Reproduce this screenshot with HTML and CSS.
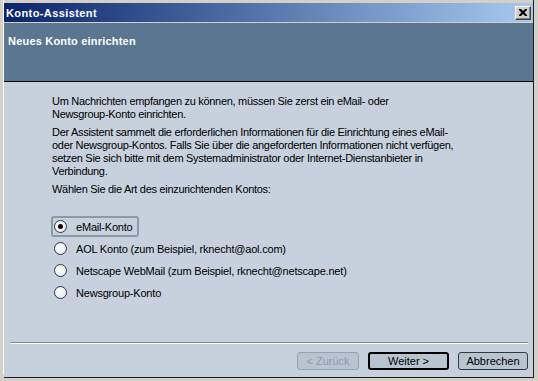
FILE: index.html
```html
<!DOCTYPE html>
<html lang="de">
<head>
    <meta charset="UTF-8">
    <title>Konto-Assistent</title>
    <link rel="stylesheet" href="styles.css">
</head>
<body>
    <div class="window">
        <div class="titlebar">
            <span class="title">Konto-Assistent</span>
            <span class="close-btn">
                <svg width="8" height="7" viewBox="0 0 8 7">
                    <path d="M0 0h2l2 2 2-2h2v1l-2.5 2.5 2.5 2.5v1h-2l-2-2-2 2h-2v-1l2.5-2.5-2.5-2.5z" fill="#000"/>
                </svg>
            </span>
        </div>

        <div class="header">
            <h1>Neues Konto einrichten</h1>
        </div>

        <div class="content">
            <div class="intro">
                <p>Um Nachrichten empfangen zu können, müssen Sie zerst ein eMail- oder<br>Newsgroup-Konto einrichten.</p>
                <p>Der Assistent sammelt die erforderlichen Informationen für die Einrichtung eines eMail-<br>oder Newsgroup-Kontos. Falls Sie über die angeforderten Informationen nicht verfügen,<br>setzen Sie sich bitte mit dem Systemadministrator oder Internet-Dienstanbieter in<br>Verbindung.</p>
                <p>Wählen Sie die Art des einzurichtenden Kontos:</p>
            </div>

            <div class="options">
                <label class="option focused"><span class="radio checked"></span>eMail-Konto</label>
                <label class="option"><span class="radio"></span>AOL Konto (zum Beispiel, rknecht@aol.com)</label>
                <label class="option"><span class="radio"></span>Netscape WebMail (zum Beispiel, rknecht@netscape.net)</label>
                <label class="option"><span class="radio"></span>Newsgroup-Konto</label>
            </div>

            <div class="footer">
                <div class="separator"></div>
                <div class="buttons">
                    <button class="btn btn-back" disabled>&lt; Zurück</button>
                    <button class="btn btn-next">Weiter &gt;</button>
                    <button class="btn btn-cancel">Abbrechen</button>
                </div>
            </div>
        </div>
    </div>
</body>
</html>
```

FILE: styles.css
```css
body {
    margin: 0;
    padding: 0;
    background-color: #d4d0c8;
    font-family: "Liberation Sans", Arial, sans-serif;
    font-size: 11px;
}

.window {
    width: 530px;
    height: 378px;
    margin-left: 4px;
    padding-top: 3px;
    box-sizing: border-box;
    border-right: 1px solid #202020;
    border-bottom: 1px solid #202020;
    box-shadow: -3px -2px 0 -2px #ffffff;
    display: flex;
    flex-direction: column;
}

.titlebar {
    height: 19px;
    margin-bottom: 1px;
    background: linear-gradient(to right, #0a246a, #a6caf0);
    display: flex;
    align-items: center;
    justify-content: space-between;
    padding: 0 2px;
}

.title {
    color: #fff;
    font-weight: bold;
    font-size: 11px;
    letter-spacing: 0.4px;
}

.close-btn {
    width: 12px;
    height: 10px;
    background-color: #d4d0c8;
    border-top: 1px solid #fff;
    border-left: 1px solid #fff;
    border-right: 1px solid #404040;
    border-bottom: 1px solid #404040;
    box-shadow: inset -1px -1px 0 #808080;
    display: flex;
    align-items: center;
    justify-content: center;
    padding: 1px;
}

.header {
    height: 58px;
    background-color: #5b7691;
    border-bottom: 1px solid #000;
}

.header h1 {
    margin: 0;
    padding: 12px 0 0 4px;
    color: #fff;
    font-size: 11px;
    font-weight: bold;
    line-height: 13px;
    letter-spacing: 0.2px;
}

.content {
    flex: 1;
    background-color: #c6d1dd;
    display: flex;
    flex-direction: column;
}

.intro {
    padding: 13px 0 0 48px;
}

.intro p {
    margin: 0 0 5px 0;
    line-height: 13px;
    color: #000;
    letter-spacing: -0.3px;
}

.options {
    margin-top: 15px;
    padding-left: 47px;
    display: flex;
    flex-direction: column;
    align-items: flex-start;
    gap: 1px;
}

.option {
    height: 21px;
    box-sizing: border-box;
    display: flex;
    align-items: center;
    padding: 0 4px 0 1px;
    border: 2px solid transparent;
    border-radius: 3px;
    letter-spacing: -0.2px;
}

.option.focused {
    border-color: #8d99a7;
}

.radio {
    width: 13px;
    height: 13px;
    box-sizing: border-box;
    border: 1px solid #2c3844;
    border-radius: 50%;
    background: radial-gradient(circle at 40% 40%, #ffffff, #dde5ee);
    margin-right: 9px;
    display: flex;
    align-items: center;
    justify-content: center;
}

.radio.checked::after {
    content: "";
    width: 5px;
    height: 5px;
    border-radius: 50%;
    background-color: #000;
}

.footer {
    margin-top: auto;
    padding-bottom: 7px;
}

.separator {
    margin: 0 5px 0 6px;
    height: 1px;
    background-color: #7d8a98;
    border-bottom: 1px solid #fff;
}

.buttons {
    display: flex;
    justify-content: flex-end;
    gap: 9px;
    margin-top: 8px;
    padding-right: 5px;
}

.btn {
    height: 18px;
    padding: 0;
    font-family: "Liberation Sans", Arial, sans-serif;
    font-size: 11px;
    background-color: #b9c4d1;
    border: 1px solid #303840;
    border-radius: 3px;
    color: #000;
}

.btn-back {
    width: 62px;
    color: #8e9aa9;
    border-color: #98a4b1;
}

.btn-next {
    width: 81px;
    border: 2px solid #000;
}

.btn-cancel {
    width: 70px;
}
```
